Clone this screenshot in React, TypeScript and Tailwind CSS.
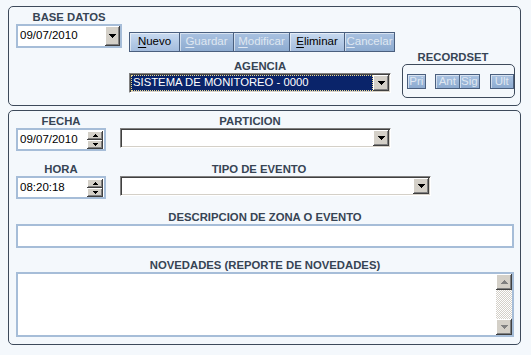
import React from 'react';

const label = 'text-[11.3px] font-bold leading-[14px] text-[#374454] text-center whitespace-nowrap';
const raised =
  'bg-[#d4d0c8] shadow-[inset_-1px_-1px_0_#404040,inset_1px_1px_0_#ffffff,inset_-2px_-2px_0_#808080]';
const sunken =
  'border border-t-[#808080] border-l-[#808080] border-r-white border-b-white shadow-[inset_1px_1px_0_#404040,inset_-1px_-1px_0_#d4d0c8]';

function DownArrow({ color = '#000' }: { color?: string }) {
  return (
    <svg width="7" height="4" shapeRendering="crispEdges">
      <path d="M0 0h7v1H0zM1 1h5v1H1zM2 2h3v1H2zM3 3h1v1H3z" fill={color} />
    </svg>
  );
}

function UpArrow({ color = '#000' }: { color?: string }) {
  return (
    <svg width="7" height="4" shapeRendering="crispEdges">
      <path d="M3 0h1v1H3zM2 1h3v1H2zM1 2h5v1H1zM0 3h7v1H0z" fill={color} />
    </svg>
  );
}

function DropBtn({ className = '' }: { className?: string }) {
  return (
    <div className={`${raised} flex items-center justify-center shrink-0 ${className}`}>
      <DownArrow />
    </div>
  );
}

function Spin() {
  return (
    <div className="flex flex-col w-[16px] shrink-0">
      <div className={`${raised} h-[9px] flex items-center justify-center`}>
        <svg width="5" height="3" shapeRendering="crispEdges">
          <path d="M2 0h1v1H2zM1 1h3v1H1zM0 2h5v1H0z" fill="#000" />
        </svg>
      </div>
      <div className={`${raised} h-[9px] flex items-center justify-center`}>
        <svg width="5" height="3" shapeRendering="crispEdges">
          <path d="M0 0h5v1H0zM1 1h3v1H1zM2 2h1v1H2z" fill="#000" />
        </svg>
      </div>
    </div>
  );
}

function ToolBtn({ text, on, w }: { text: string; on?: boolean; w: string }) {
  return (
    <div
      className={`${w} h-[20px] -ml-px first:ml-0 border border-[#4a5f7e] flex items-center justify-center text-[11.5px] shadow-[inset_1px_1px_0_rgba(255,255,255,0.55)] ${
        on
          ? 'bg-gradient-to-b from-[#c8daf0] to-[#a3bcdd] text-black'
          : 'bg-gradient-to-b from-[#aac2e1] to-[#8dabd0] text-[#dfe7f1]'
      }`}
    >
      <span>
        <span className="underline underline-offset-2">{text[0]}</span>
        {text.slice(1)}
      </span>
    </div>
  );
}

function NavBtn({ text, w, className = '' }: { text: string; w: string; className?: string }) {
  return (
    <div
      className={`${w} h-[15px] border border-[#4a5f7e] flex items-center justify-center text-[11.5px] leading-none text-[#dfe7f1] bg-gradient-to-b from-[#aac2e1] to-[#8dabd0] shadow-[inset_1px_1px_0_rgba(255,255,255,0.55)] ${className}`}
    >
      {text}
    </div>
  );
}

export default function App() {
  return (
    <div className="w-[531px] h-[355px] bg-[#f4f8fc] pt-[6px] font-['Liberation_Sans',Arial,sans-serif] text-black overflow-hidden">
      {/* top panel */}
      <div className="ml-[8px] w-[513px] h-[100px] rounded-[5px] border border-[#3d4a5b] flex items-start">
        <div className="ml-[7px] mt-[3px] w-[106px] flex flex-col">
          <div className={label}>BASE DATOS</div>
          <div className="h-[24px] border-2 border-[#a6bdd8] bg-white flex items-center pl-[2px]">
            <span className="flex-1 text-[11.5px] leading-none">09/07/2010</span>
            <DropBtn className="w-[15px] h-[20px]" />
          </div>
        </div>

        <div className="ml-[7px] mt-[25px] w-[266px] flex flex-col">
          <div className="flex">
            <ToolBtn text="Nuevo" on w="w-[51px]" />
            <ToolBtn text="Guardar" w="w-[55px]" />
            <ToolBtn text="Modificar" w="w-[57px]" />
            <ToolBtn text="Eliminar" on w="w-[56px]" />
            <ToolBtn text="Cancelar" w="w-[51px]" />
          </div>
          <div className={`${label} mt-[7px] w-[262px]`}>AGENCIA</div>
          <div className={`${sunken} w-[262px] h-[20px] bg-white flex items-center p-px`}>
            <div className="flex-1 h-full bg-[#0a246a] outline-1 outline-dotted outline-[#e8d890] -outline-offset-1 flex items-center pl-[2px] text-white text-[11.3px] leading-none">
              SISTEMA DE MONITOREO - 0000
            </div>
            <DropBtn className="w-[16px] h-full" />
          </div>
        </div>

        <div className="ml-[7px] mt-[43px] w-[113px] flex flex-col">
          <div className={`${label} w-[102px] leading-[13px]`}>RECORDSET</div>
          <div className="h-[34px] rounded-[5px] border border-[#3d4a5b] pt-[9px] flex items-start">
            <NavBtn text="Pri" w="w-[19px]" className="ml-[4px]" />
            <NavBtn text="Ant" w="w-[26px]" className="ml-[9px]" />
            <NavBtn text="Sig" w="w-[21px]" className="-ml-px" />
            <NavBtn text="Ult" w="w-[25px]" className="ml-[10px]" />
          </div>
        </div>
      </div>

      {/* bottom panel */}
      <div className="ml-[8px] mt-[4px] w-[513px] h-[235px] rounded-[5px] border border-[#3d4a5b] flex flex-col">
        <div className="flex mt-[3px]">
          <div className="ml-[7px] w-[90px] flex flex-col">
            <div className={label}>FECHA</div>
            <div className="h-[23px] border-2 border-[#a6bdd8] bg-white flex items-center pl-[2px] pr-[1px]">
              <span className="flex-1 text-[11.5px] leading-none">09/07/2010</span>
              <Spin />
            </div>
          </div>
          <div className="ml-[14px] flex flex-col">
            <div className={`${label} w-[260px]`}>PARTICION</div>
            <div className={`${sunken} w-[271px] h-[20px] bg-white flex justify-end p-px`}>
              <DropBtn className="w-[16px] h-full" />
            </div>
          </div>
        </div>

        <div className="flex mt-[11px]">
          <div className="ml-[7px] w-[90px] flex flex-col">
            <div className={label}>HORA</div>
            <div className="h-[23px] border-2 border-[#a6bdd8] bg-white flex items-center pl-[2px] pr-[1px]">
              <span className="flex-1 text-[11.5px] leading-none">08:20:18</span>
              <Spin />
            </div>
          </div>
          <div className="ml-[14px] flex flex-col">
            <div className={`${label} w-[278px]`}>TIPO DE EVENTO</div>
            <div className={`${sunken} w-[311px] h-[20px] bg-white flex justify-end p-px`}>
              <DropBtn className="w-[16px] h-full" />
            </div>
          </div>
        </div>

        <div className="ml-[7px] mt-[11px] w-[498px] flex flex-col">
          <div className={label}>DESCRIPCION DE ZONA O EVENTO</div>
          <div className="h-[24px] border-2 border-[#a6bdd8] bg-white" />
        </div>

        <div className="ml-[7px] mt-[10px] w-[498px] flex flex-col">
          <div className={label}>NOVEDADES (REPORTE DE NOVEDADES)</div>
          <div className="h-[65px] border-2 border-[#a6bdd8] bg-white flex justify-end">
            <div className="w-[16px] flex flex-col">
              <div className={`${raised} h-[16px] flex items-center justify-center`}>
                <UpArrow color="#808080" />
              </div>
              <div className="flex-1 bg-[repeating-conic-gradient(#d4d0c8_0_25%,#ffffff_0_50%)] bg-[length:2px_2px]" />
              <div className={`${raised} h-[16px] flex items-center justify-center`}>
                <DownArrow color="#808080" />
              </div>
            </div>
          </div>
        </div>
      </div>
    </div>
  );
}
